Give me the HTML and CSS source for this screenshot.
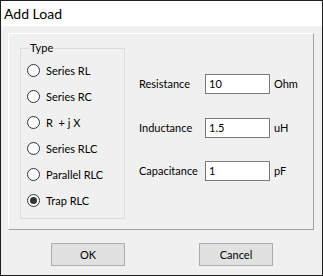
FILE: index.html
```html
<!DOCTYPE html>
<html>
<head>
<meta charset="utf-8">
<link rel="stylesheet" href="styles.css">
</head>
<body>
<div class="window">
  <div class="titlebar">Add Load</div>
  <div class="client">
    <div class="panel">
      <div class="group">
        <span class="legend">Type</span>
        <div class="radio"><span class="dot"></span><span>Series RL</span></div>
        <div class="radio"><span class="dot"></span><span>Series RC</span></div>
        <div class="radio"><span class="dot"></span><span>R&nbsp;&nbsp;+ j X</span></div>
        <div class="radio"><span class="dot"></span><span>Series RLC</span></div>
        <div class="radio"><span class="dot"></span><span>Parallel RLC</span></div>
        <div class="radio"><span class="dot checked"></span><span>Trap RLC</span></div>
      </div>
      <div class="fields">
        <span class="label">Resistance</span><div class="box">10</div><span class="unit">Ohm</span>
        <span class="label">Inductance</span><div class="box">1.5</div><span class="unit">uH</span>
        <span class="label">Capacitance</span><div class="box">1</div><span class="unit">pF</span>
      </div>
    </div>
    <div class="buttons">
      <div class="btn">OK</div>
      <div class="btn">Cancel</div>
    </div>
  </div>
</div>
</body>
</html>
```
FILE: styles.css
```css
html, body {
  margin: 0;
  padding: 0;
  background: #f0f0f0;
}
body {
  font-family: Lato, "Liberation Sans", sans-serif;
  font-size: 11px;
  color: #000;
}
.window {
  box-sizing: border-box;
  width: 323px;
  height: 276px;
  border: 1px solid #1e1e1e;
  background: #f0f0f0;
  display: flex;
  flex-direction: column;
}
.titlebar {
  height: 25px;
  background: #fff;
  font-size: 14px;
  line-height: 25px;
  padding-left: 3px;
  color: #000;
}
.client {
  flex: 1;
  padding: 7px 0 0 7px;
}
.panel {
  box-sizing: border-box;
  width: 306px;
  height: 197px;
  border-top: 1px solid #fff;
  border-left: 1px solid #fff;
  border-right: 1px solid #a0a0a0;
  border-bottom: 1px solid #a0a0a0;
  display: flex;
  padding: 14px 0 0 11px;
}
.group {
  position: relative;
  box-sizing: border-box;
  width: 105px;
  height: 171px;
  border: 1px solid #dcdcdc;
  padding-top: 8px;
  display: flex;
  flex-direction: column;
}
.legend {
  position: absolute;
  top: -8px;
  left: 8px;
  padding: 0 1px;
  background: #f0f0f0;
  line-height: 14px;
}
.radio {
  height: 26px;
  display: flex;
  align-items: center;
  padding-left: 6px;
  gap: 6px;
}
.dot {
  box-sizing: border-box;
  width: 13px;
  height: 13px;
  border: 1px solid #333;
  border-radius: 50%;
  background: #fff;
  display: flex;
  align-items: center;
  justify-content: center;
}
.dot.checked::after {
  content: "";
  width: 7px;
  height: 7px;
  border-radius: 50%;
  background: #333;
}
.fields {
  margin-left: 14px;
  margin-top: 26px;
  display: grid;
  grid-template-columns: 62px 65px auto;
  grid-auto-rows: 20px;
  row-gap: 23.5px;
  column-gap: 4px;
  align-items: center;
  align-content: start;
}
.label {
  line-height: 20px;
}
.box {
  box-sizing: border-box;
  height: 20px;
  border: 1px solid #7a7a7a;
  background: #fff;
  line-height: 18px;
  padding-left: 3px;
}
.unit {
  line-height: 20px;
}
.buttons {
  display: flex;
  padding: 13px 0 0 43px;
  gap: 74px;
}
.btn {
  box-sizing: border-box;
  width: 74px;
  height: 23px;
  border: 1px solid #adadad;
  background: #e1e1e1;
  display: flex;
  align-items: center;
  justify-content: center;
}
```
